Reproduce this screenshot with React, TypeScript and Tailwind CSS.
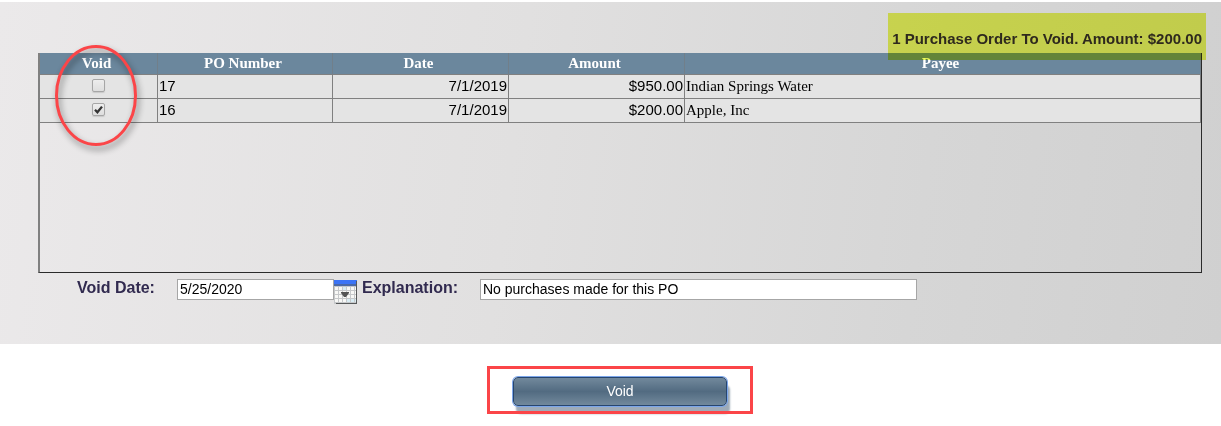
import React, { useState } from "react";

type Order = { po: number; date: string; amount: number; payee: string };

const orders: Order[] = [
  { po: 17, date: "7/1/2019", amount: 950, payee: "Indian Springs Water" },
  { po: 16, date: "7/1/2019", amount: 200, payee: "Apple, Inc" },
];

const money = (n: number) => `$${n.toFixed(2)}`;

const headCell = "h-[22px] border-r border-b border-r-[#717f8a] border-b-[#808080] py-0 pr-1 pl-0 pb-0.5 text-center leading-4";
const bodyCell = "h-6 border-r border-b border-[#808080] px-px pt-0 pb-0.5 leading-4";
const sans = "font-['Liberation_Sans',Arial,sans-serif]";

const CalendarIcon: React.FC = () => (
  <svg width="23" height="24" viewBox="0 0 23 24" shapeRendering="crispEdges" aria-hidden="true">
    <rect width="23" height="24" fill="#c6c8ca" />
    {[0, 1, 2, 3].map((row) =>
      [0, 1, 2, 3, 4, 5].map((col) => (
        <rect
          key={`${row}-${col}`}
          x={1 + col * 4}
          y={7 + row * 4}
          width="3"
          height="3"
          fill={(row === 0 && col === 2) || (row === 3 && col > 2) ? "#d9ecf3" : "#f8f8f6"}
        />
      ))
    )}
    <rect width="23" height="4" fill="#3c74f5" />
    <rect y="4" width="23" height="2" fill="#4a69a8" />
    <rect x="22" y="1" width="1" height="23" fill="#57595a" />
    <rect x="2" y="23" width="21" height="1" fill="#57595a" />
    <path d="M7 12h8v1l-3 4h-2l-3-4z" fill="#555" shapeRendering="auto" />
  </svg>
);

const CheckBox: React.FC<{ label: string; checked: boolean; onChange: () => void }> = ({
  label,
  checked,
  onChange,
}) => (
  <label className="mx-auto grid size-[13px] place-items-center">
    <input
      type="checkbox"
      aria-label={label}
      checked={checked}
      onChange={onChange}
      className="col-start-1 row-start-1 size-[13px] appearance-none rounded-[2px] border border-[#a6a6a6] bg-linear-to-b from-[#ededed] to-[#dedede] shadow-[0_1px_1px_#c8c8c8]"
    />
    {checked && (
      <svg className="pointer-events-none col-start-1 row-start-1" width="9" height="9" viewBox="0 0 9 9" aria-hidden="true">
        <path d="M1 4.8 3.4 7.3 8 1.6" fill="none" stroke="#333" strokeWidth="2.3" />
      </svg>
    )}
  </label>
);

export default function App() {
  const [selected, setSelected] = useState<number[]>([16]);
  const [voidDate, setVoidDate] = useState("5/25/2020");
  const [explanation, setExplanation] = useState("No purchases made for this PO");

  const toggle = (po: number) =>
    setSelected((prev) => (prev.includes(po) ? prev.filter((p) => p !== po) : [...prev, po]));

  const total = orders.filter((o) => selected.includes(o.po)).reduce((sum, o) => sum + o.amount, 0);

  return (
    <div className={`bg-white pt-0.5 ${sans}`}>
      <main className="bg-[linear-gradient(97deg,#ebe9ea,#e1e0e0_42%,#d6d6d6_75%,#d0d0d0)] pr-[19px] pb-10 pl-[38px]">
        <div className="flex justify-end">
          <p className="relative pt-7 pb-[5px] text-[15px] leading-[18px] font-bold text-[#312a4f]">
            {selected.length} Purchase Order To Void. Amount: {money(total)}
            {/* highlighter */}
            <span className="pointer-events-none absolute top-[11px] -right-1 -bottom-[7px] -left-1 z-10 bg-[#ecf95c] mix-blend-multiply" />
          </p>
        </div>

        <div className="relative min-h-[220px] border-r border-b border-l-2 border-r-[#2b2b2b] border-b-[#2b2b2b] border-l-[#808080]">
          <table className="w-full table-fixed border-separate border-spacing-0 text-[15px]">
            <colgroup>
              <col className="w-[118px]" />
              <col className="w-[175px]" />
              <col className="w-[176px]" />
              <col className="w-[176px]" />
              <col />
            </colgroup>
            <thead className="bg-[#6b879d] font-['Liberation_Serif','Times_New_Roman',serif] text-white">
              <tr>
                <th className={headCell}>Void</th>
                <th className={headCell}>PO Number</th>
                <th className={headCell}>Date</th>
                <th className={headCell}>Amount</th>
                <th className={headCell}>Payee</th>
              </tr>
            </thead>
            <tbody className="bg-[#e4e4e4] text-black">
              {orders.map((o) => (
                <tr key={o.po}>
                  <td className={bodyCell}>
                    <CheckBox label={`Void PO ${o.po}`} checked={selected.includes(o.po)} onChange={() => toggle(o.po)} />
                  </td>
                  <td className={bodyCell}>{o.po}</td>
                  <td className={`${bodyCell} text-right`}>{o.date}</td>
                  <td className={`${bodyCell} text-right`}>{money(o.amount)}</td>
                  <td className={`${bodyCell} font-['Liberation_Serif','Times_New_Roman',serif]`}>{o.payee}</td>
                </tr>
              ))}
            </tbody>
          </table>
          {/* red ring around the Void column */}
          <svg
            className="pointer-events-none absolute -top-2.5 left-3 drop-shadow-[2px_4px_3px_rgba(0,0,0,0.45)]"
            width="90"
            height="108"
            viewBox="0 0 90 108"
            aria-hidden="true"
          >
            <ellipse cx="44" cy="52.5" rx="39.5" ry="49" fill="none" stroke="#fb4548" strokeWidth="3" />
          </svg>
        </div>

        <div className="flex items-start pt-1.5 pl-[39px]">
          <label htmlFor="void-date" className="w-[100px] text-base leading-[18px] font-bold text-[#312a4f]">
            Void Date:
          </label>
          <input
            id="void-date"
            value={voidDate}
            onChange={(e) => setVoidDate(e.target.value)}
            className="h-[21px] w-[157px] border border-[#a6a6a6] bg-white px-0.5 pb-0.5 text-sm text-black"
          />
          <button type="button" aria-label="Open calendar" className="mt-px">
            <CalendarIcon />
          </button>
          <label htmlFor="explanation" className="ml-[5px] w-[118px] text-base leading-[18px] font-bold text-[#312a4f]">
            Explanation:
          </label>
          <input
            id="explanation"
            value={explanation}
            onChange={(e) => setExplanation(e.target.value)}
            className="h-[21px] w-[437px] border border-[#a6a6a6] bg-white px-0.5 pb-0.5 text-sm text-black"
          />
        </div>
      </main>

      <div className="flex justify-center py-[22px] pl-[19px]">
        <div className="relative px-[26px] pt-[11px] pb-2">
          <button
            type="button"
            className="block h-[29px] w-[214px] rounded-[5px] border border-[#27466f] bg-linear-to-b from-[#72899c] via-[#526b81] to-[#72899c] pb-0.5 text-sm text-white shadow-[0_0_0_1px_#7ca6ea,3px_8px_2px_#9eabb8]"
          >
            Void
          </button>
          <span className="pointer-events-none absolute inset-0 border-3 border-[#fb4548]" />
        </div>
      </div>
    </div>
  );
}
